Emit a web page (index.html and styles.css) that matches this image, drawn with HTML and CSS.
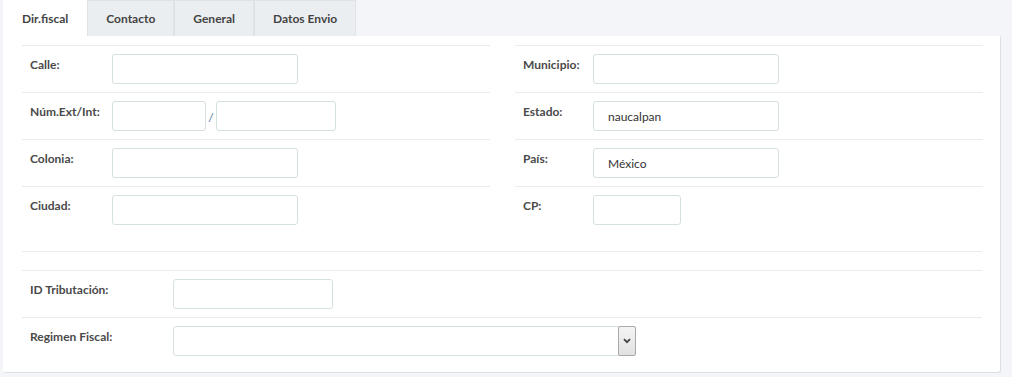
FILE: index.html
```html
<!DOCTYPE html>
<html lang="es">
<head>
    <meta charset="UTF-8">
    <meta name="viewport" content="width=device-width, initial-scale=1.0">
    <title>Cliente - Dir.fiscal</title>
    <link rel="stylesheet" href="styles.css">
</head>
<body>
    <div class="page">
        <ul class="tabs">
            <li class="tab active">Dir.fiscal</li>
            <li class="tab">Contacto</li>
            <li class="tab">General</li>
            <li class="tab">Datos Envio</li>
        </ul>
        <div class="panel">
            <div class="columns">
                <div class="column">
                    <div class="row">
                        <label class="label">Calle:</label>
                        <input class="field wide" type="text">
                    </div>
                    <div class="row">
                        <label class="label">Núm.Ext/Int:</label>
                        <input class="field ext" type="text">
                        <span class="slash">/</span>
                        <input class="field int" type="text">
                    </div>
                    <div class="row">
                        <label class="label">Colonia:</label>
                        <input class="field wide" type="text">
                    </div>
                    <div class="row">
                        <label class="label">Ciudad:</label>
                        <input class="field wide" type="text">
                    </div>
                </div>
                <div class="column right">
                    <div class="row">
                        <label class="label">Municipio:</label>
                        <input class="field wide" type="text">
                    </div>
                    <div class="row">
                        <label class="label">Estado:</label>
                        <input class="field wide" type="text" value="naucalpan">
                    </div>
                    <div class="row">
                        <label class="label">País:</label>
                        <input class="field wide" type="text" value="México">
                    </div>
                    <div class="row">
                        <label class="label">CP:</label>
                        <input class="field cp" type="text">
                    </div>
                </div>
            </div>
            <hr class="divider">
            <div class="fiscal">
                <div class="row">
                    <label class="label">ID Tributación:</label>
                    <input class="field tax" type="text">
                </div>
                <div class="row">
                    <label class="label">Regimen Fiscal:</label>
                    <div class="select-box">
                        <span class="select-arrow">
                            <svg width="8" height="6" viewBox="0 0 8 6"><path d="M1 1.2 L4 4.2 L7 1.2" fill="none" stroke="#444" stroke-width="1.8"/></svg>
                        </span>
                    </div>
                </div>
            </div>
        </div>
    </div>
</body>
</html>
```

FILE: styles.css
```css
body {
    margin: 0;
    background-color: #f3f5f8;
    font-family: Lato, "Open Sans", Arial, sans-serif;
    font-size: 12px;
    color: #4a4a4a;
}
.page {
    padding: 0 11px 0 3px;
}
.tabs {
    list-style: none;
    margin: 0;
    padding: 0;
    display: flex;
    height: 36px;
}
.tab {
    padding: 0 18px;
    line-height: 35px;
    font-weight: bold;
    color: #444;
    background-color: #ebeef0;
    border: 1px solid #dfe3e6;
    border-bottom: none;
}
.tab.active {
    background-color: #fff;
    border-color: #fff;
}
.panel {
    background-color: #fff;
    border: 1px solid #fff;
    border-right-color: #d9dfe4;
    border-bottom-color: #d9dfe4;
    border-radius: 0 0 3px 3px;
    padding: 8px 3px 8px 3px;
}
.columns {
    display: flex;
}
.column {
    flex: 1;
    padding: 0 15px;
}
.column.right {
    padding-left: 10px;
    padding-right: 14px;
}
.row {
    display: flex;
    align-items: flex-start;
    border-top: 1px solid #e9ebec;
    padding: 8px 8px;
}
.label {
    width: 82px;
    flex-shrink: 0;
    font-weight: bold;
    padding-top: 3px;
    line-height: 16px;
}
.right .label {
    width: 70px;
}
.field {
    box-sizing: border-box;
    height: 30px;
    border: 1px solid #d6e0df;
    border-radius: 3px;
    padding: 0 14px;
    font-family: inherit;
    font-size: 12px;
    color: #333;
    background: #fff;
}
.wide {
    width: 186px;
}
.ext {
    width: 94px;
}
.int {
    width: 120px;
}
.cp {
    width: 88px;
}
.tax {
    width: 160px;
}
.slash {
    width: 10px;
    text-align: center;
    color: #4a6fa0;
    padding-top: 9px;
}
.divider {
    border: none;
    border-top: 1px solid #e9ebec;
    margin: 18px 15px 18px;
}
.fiscal {
    padding: 0 15px;
}
.fiscal .label {
    width: 143px;
}
.select-box {
    box-sizing: border-box;
    width: 463px;
    height: 30px;
    border: 1px solid #d6e0df;
    border-radius: 3px;
    display: flex;
    justify-content: flex-end;
}
.select-arrow {
    box-sizing: border-box;
    width: 18px;
    height: 30px;
    margin: -1px -1px 0 0;
    border: 1px solid #a9a9a9;
    border-radius: 2px;
    background: linear-gradient(#f4f4f4, #e1e1e1);
    display: flex;
    align-items: center;
    justify-content: center;
}
```
